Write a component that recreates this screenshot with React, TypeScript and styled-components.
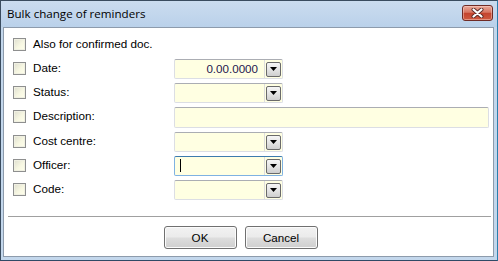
import { Fragment } from "react";
import styled, { createGlobalStyle } from "styled-components";

const GlobalStyle = createGlobalStyle`
  html, body {
    margin: 0;
    padding: 0;
    background: #ffffff;
  }
  body {
    font-family: "Liberation Sans", Arial, sans-serif;
  }
`;

const Window = styled.div`
  width: 498px;
  height: 261px;
  box-sizing: border-box;
  border: 1px solid #3a4c5f;
  border-right-color: #2b7fae;
  border-bottom-color: #2f4a66;
  background: #c3d7ec;
  display: flex;
  flex-direction: column;
`;

const TitleBar = styled.div`
  height: 26px;
  flex: none;
  display: flex;
  align-items: flex-start;
  padding-left: 6px;
  background: linear-gradient(#cbdcef, #bad1ea);
`;

const Title = styled.span`
  font-family: "Open Sans", "Noto Sans", sans-serif;
  font-size: 11.6px;
  line-height: 26px;
  color: #000000;
`;

const CloseButton = styled.div`
  margin: 4px 4px 0 auto;
  width: 31px;
  height: 16px;
  box-sizing: border-box;
  border: 1px solid #6f2b25;
  border-radius: 3px;
  background: linear-gradient(#eaa999, #d77561 45%, #c4442e 52%, #cf5a40);
  box-shadow: inset 0 0 0 1px rgba(255, 220, 210, 0.45);
  display: flex;
  align-items: center;
  justify-content: center;
`;

const Client = styled.div`
  margin: 0 3px 3px 2px;
  flex: 1;
  border: 1px solid #8d9bac;
  background: #ffffff;
  display: flex;
  flex-direction: column;
`;

const Form = styled.div`
  display: grid;
  grid-template-columns: 20px 141px 1fr;
  row-gap: 4px;
  padding: 7px 3px 0 9px;
`;

const CheckBox = styled.div`
  width: 13px;
  height: 13px;
  box-sizing: border-box;
  margin-top: 3px;
  align-self: start;
  border: 1px solid #8e8f8f;
  background: linear-gradient(135deg, #deded0 0%, #f7f7e2 55%, #ffffec 100%);
  box-shadow: inset 0 0 0 1px #f0f0e2;
`;

const Label = styled.div<{ $wide?: boolean }>`
  grid-column: ${(p) => (p.$wide ? "2 / 4" : "2")};
  height: 20px;
  font-size: 11.7px;
  line-height: 17px;
  color: #000000;
  white-space: nowrap;
`;

const Field = styled.div<{ $wide?: boolean; $focused?: boolean }>`
  width: ${(p) => (p.$wide ? "315px" : "109px")};
  height: ${(p) => (p.$wide ? "21px" : "20px")};
  box-sizing: border-box;
  display: flex;
  align-items: center;
  border: 1px solid ${(p) => (p.$focused ? "#7fb2e2" : "#dcdee4")};
  border-top-color: ${(p) => (p.$focused ? "#3d7bad" : "#abadb3")};
  border-radius: 2px;
  background: #ffffe2;
`;

const Value = styled.div<{ $align?: string }>`
  width: 89px;
  height: 100%;
  box-sizing: border-box;
  display: flex;
  align-items: center;
  justify-content: ${(p) => p.$align ?? "flex-start"};
  padding: 0 6px 1px 5px;
  font-size: 11.6px;
  color: #1d1650;
`;

const Caret = styled.span`
  width: 1px;
  height: 13px;
  background: #000000;
`;

const DropSep = styled.div`
  width: 1px;
  height: 100%;
  background: #dedede;
`;

const DropButton = styled.div`
  width: 15px;
  height: 15px;
  box-sizing: border-box;
  margin-left: 1px;
  border: 1px solid #6a6a6a;
  border-radius: 2px;
  background: linear-gradient(#f6f6f6, #e4e4e4 50%, #cfcfcf);
  display: flex;
  align-items: center;
  justify-content: center;
`;

const Separator = styled.div`
  height: 1px;
  margin: 16px 2px 0 4px;
  background: #a0a0a0;
`;

const ButtonRow = styled.div`
  display: flex;
  justify-content: center;
  gap: 8px;
  margin-top: 9px;
  padding-right: 16px;
`;

const Button = styled.div`
  width: 73px;
  height: 23px;
  box-sizing: border-box;
  border: 1px solid #707070;
  border-radius: 3px;
  background: linear-gradient(#f2f2f2, #ebebeb 48%, #dddddd 52%, #cfcfcf);
  box-shadow: inset 0 0 0 1px #fbfbfb;
  display: flex;
  align-items: center;
  justify-content: center;
  font-size: 11.6px;
  color: #000000;
`;

const Arrow = () => (
  <svg width="7" height="4" viewBox="0 0 7 4">
    <path d="M0 0 H7 L3.5 4 Z" fill="#000" />
  </svg>
);

const CloseIcon = () => (
  <svg width="13" height="10" viewBox="0 0 13 10">
    <path d="M2.5 1.5 L10.5 8.5 M10.5 1.5 L2.5 8.5" stroke="#5a2a26" strokeWidth="4" strokeLinecap="round" />
    <path d="M2.5 1.5 L10.5 8.5 M10.5 1.5 L2.5 8.5" stroke="#ffffff" strokeWidth="2.2" strokeLinecap="round" />
  </svg>
);

type Row = {
  label: string;
  value?: string;
  wide?: boolean;
  focused?: boolean;
};

const rows: Row[] = [
  { label: "Date:", value: "0.00.0000" },
  { label: "Status:" },
  { label: "Description:", wide: true },
  { label: "Cost centre:" },
  { label: "Officer:", focused: true },
  { label: "Code:" },
];

export default function App() {
  return (
    <>
      <GlobalStyle />
      <Window>
        <TitleBar>
          <Title>Bulk change of reminders</Title>
          <CloseButton>
            <CloseIcon />
          </CloseButton>
        </TitleBar>
        <Client>
          <Form>
            <CheckBox />
            <Label $wide>Also for confirmed doc.</Label>
            {rows.map((row) => (
              <Fragment key={row.label}>
                <CheckBox />
                <Label>{row.label}</Label>
                <Field $wide={row.wide} $focused={row.focused}>
                  {!row.wide && (
                    <>
                      <Value $align={row.value ? "flex-end" : "flex-start"}>
                        {row.value}
                        {row.focused && <Caret />}
                      </Value>
                      <DropSep />
                      <DropButton>
                        <Arrow />
                      </DropButton>
                    </>
                  )}
                </Field>
              </Fragment>
            ))}
          </Form>
          <Separator />
          <ButtonRow>
            <Button>OK</Button>
            <Button>Cancel</Button>
          </ButtonRow>
        </Client>
      </Window>
    </>
  );
}
